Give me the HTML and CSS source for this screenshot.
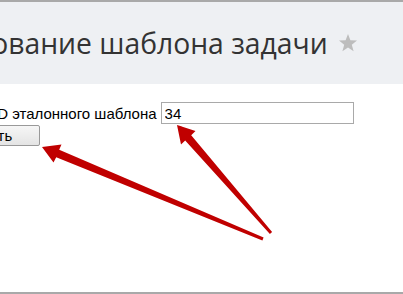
FILE: index.html
```html
<!DOCTYPE html>
<html lang="ru">

<head>
    <meta charset="UTF-8" />
    <title>Редактирование шаблона задачи</title>
    <link rel="stylesheet" href="styles.css">
</head>

<body>
    <!-- Header -->
    <div class="page-header">
        <h1>Редактирование шаблона задачи</h1>
        <svg class="star" viewBox="0 0 20 20" width="20" height="20">
            <polygon points="10,1 12.4,7.3 19,7.6 13.8,11.8 15.6,18.3 10,14.6 4.4,18.3 6.2,11.8 1,7.6 7.6,7.3" fill="#bdbdbd" />
        </svg>
    </div>

    <!-- Form -->
    <div class="content">
        <div class="row">
            <label for="templateId">ID эталонного шаблона</label>
            <input id="templateId" type="text" value="34" />
        </div>
        <button class="btn-save">Сохранить</button>
    </div>

    <!-- Annotation arrows -->
    <svg class="arrows" width="403" height="294" viewBox="0 0 403 294">
        <polygon fill="#c00000"
            points="42,147 61.5,144.5 59.2,149.8 263.6,237.6 262.4,240.4 56.2,157.2 53.5,162.5" />
        <polygon fill="#c00000"
            points="177,125 195.5,131 191.2,135.2 272.1,232 269.9,234 185.2,140.4 181,144.5" />
    </svg>
</body>

</html>
```

FILE: styles.css
```css
* {
    box-sizing: border-box;
    margin: 0;
    padding: 0;
}

html,
body {
    width: 403px;
    height: 294px;
    overflow: hidden;
}

body {
    position: relative;
    background: #fff;
    border-top: 2px solid #a9a9a9;
    border-bottom: 2px solid #a9a9a9;
    font-family: Arial, "Liberation Sans", sans-serif;
    color: #000;
}

.page-header {
    display: flex;
    align-items: center;
    gap: 10px;
    height: 82px;
    background: #eef0f3;
    white-space: nowrap;
}

.page-header h1 {
    margin-left: -137px;
    font-family: "Open Sans", sans-serif;
    font-weight: 400;
    font-size: 28.3px;
    color: #333;
}

.star {
    flex-shrink: 0;
}

.content {
    padding-top: 18px;
    font-size: 15px;
}

.row {
    display: flex;
    align-items: center;
    gap: 4px;
    white-space: nowrap;
}

.row label {
    margin-left: -7px;
}

.row input {
    width: 193px;
    height: 22px;
    padding: 0 3px;
    border: 1px solid #a9a9a9;
    font-family: Arial, "Liberation Sans", sans-serif;
    font-size: 15px;
}

.btn-save {
    display: block;
    margin-top: 1px;
    margin-left: -90px;
    width: 130px;
    height: 21px;
    border: 1px solid #999;
    border-radius: 2px;
    background: linear-gradient(#f6f6f6, #e4e4e4);
    font-family: Arial, "Liberation Sans", sans-serif;
    font-size: 15px;
}

.arrows {
    position: absolute;
    top: -2px;
    left: 0;
}
```
